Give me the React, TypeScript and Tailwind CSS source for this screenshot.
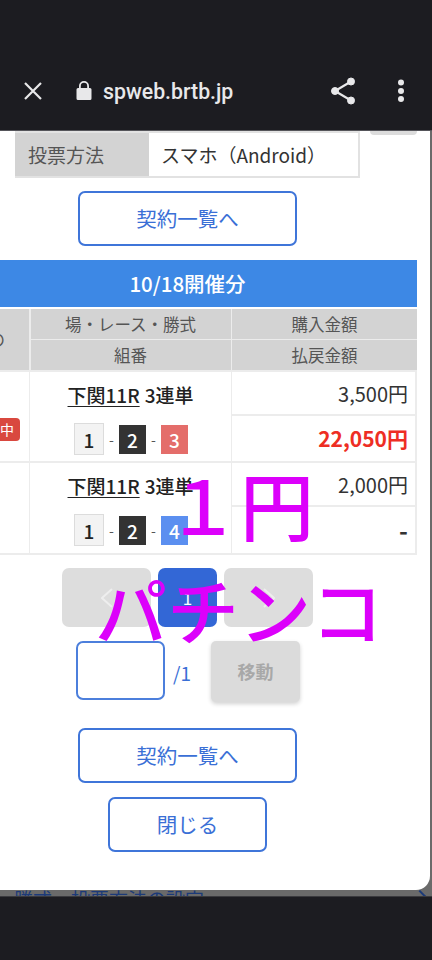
const jp = "font-['Noto_Sans_CJK_JP',_'Noto_Sans',_sans-serif]"

const ToolbarIcons = {
  close: (
    <svg viewBox="0 0 20 20" className="h-5 w-5" stroke="#e8e8ea" strokeWidth="2.2" fill="none">
      <path d="M2 2 L18 18 M18 2 L2 18" />
    </svg>
  ),
  lock: (
    <svg viewBox="0 0 16 20" className="h-5 w-4" fill="#e8e8ea">
      <path d="M2 7h1V5a5 5 0 0 1 10 0v2h1a1.5 1.5 0 0 1 1.5 1.5v9A1.5 1.5 0 0 1 14 19H2a1.5 1.5 0 0 1-1.5-1.5v-9A1.5 1.5 0 0 1 2 7zm2.8 0h6.4V5a3.2 3.2 0 0 0-6.4 0z" />
    </svg>
  ),
  share: (
    <svg viewBox="0 0 24 28" className="h-7 w-6" fill="#e8e8ea" stroke="#e8e8ea">
      <circle cx="20" cy="4.5" r="3.5" />
      <circle cx="4" cy="14" r="3.5" />
      <circle cx="20" cy="23.5" r="3.5" />
      <path d="M20 4.5 L4 14 L20 23.5" strokeWidth="2.2" fill="none" />
    </svg>
  ),
  more: (
    <svg viewBox="0 0 8 24" className="h-6 w-2" fill="#e8e8ea">
      <circle cx="4" cy="3.5" r="3" />
      <circle cx="4" cy="12" r="3" />
      <circle cx="4" cy="20" r="3" />
    </svg>
  ),
}

const Ticket = ({ last, lastClass }: { last: string; lastClass: string }) => (
  <div className="ml-[1px] flex items-center justify-center text-[19px] font-medium leading-none">
    <span className="flex h-[32px] w-[30px] items-center justify-center border border-[#dcdcdc] bg-[#f3f3f3] text-[#222]">1</span>
    <span className="mx-[5px] w-[5px] text-[14px] font-normal text-[#555]">-</span>
    <span className="flex h-[29px] w-[27px] items-center justify-center bg-[#333] text-white">2</span>
    <span className="mx-[5px] w-[5px] text-[14px] font-normal text-[#555]">-</span>
    <span className={`flex h-[29px] w-[27px] items-center justify-center text-white ${lastClass}`}>{last}</span>
  </div>
)

const HeadCell = ({ children }: { children: React.ReactNode }) => (
  <div className="flex items-center justify-center bg-[#d3d3d3] text-[16.5px] text-[#555]">{children}</div>
)

const OutlineButton = ({ label, width }: { label: string; width: string }) => (
  <button className={`mx-auto block h-[55px] rounded-[7px] border-2 border-[#3f75d9] bg-white text-[20.5px] text-[#3a6fd6] ${width}`}>
    {label}
  </button>
)

const Chevron = ({ flip }: { flip?: boolean }) => (
  <svg viewBox="0 0 12 20" className={`h-5 w-3 ${flip ? 'rotate-180' : ''}`} fill="none" stroke="#eeeeee" strokeWidth="2">
    <path d="M11 1 L1 10 L11 19" />
  </svg>
)

const TicketRow = ({
  amount,
  payout,
  payoutClass,
  last,
  lastClass,
  badge,
  rowClass,
}: {
  amount: string
  payout: string
  payoutClass: string
  last: string
  lastClass: string
  badge?: boolean
  rowClass: string
}) => (
  <div className={`grid grid-cols-[71px_203px_185px] border-b-2 border-[#ececec] ${rowClass}`}>
    <div className="flex items-start justify-end pr-[9px]">
      {badge && (
        <span className="mt-[46px] flex h-[23px] w-[40px] items-center justify-center rounded-[4px] bg-[#d9483f] text-[14px] text-white">
          的中
        </span>
      )}
    </div>
    <div className="flex flex-col items-center border-x-[1.5px] border-[#ececec] pt-[8px]">
      <div className="flex h-[30px] items-center text-[19px] font-medium text-[#222]">
        <span className="underline underline-offset-[3px]">下関11R</span>
        <span className="ml-[5px]">3連単</span>
      </div>
      <div className="mt-[13px]">
        <Ticket last={last} lastClass={lastClass} />
      </div>
    </div>
    <div className="grid grid-rows-[44px_1fr] border-r-2 border-[#ececec]">
      <div className="flex items-center justify-end border-b-2 border-[#ececec] pr-[7px] pt-[1px] text-[20px] text-[#333]">{amount}</div>
      <div className={`flex items-center justify-end pr-[7px] ${payoutClass}`}>{payout}</div>
    </div>
  </div>
)

export default function App() {
  return (
    <div className={`relative flex h-[960px] w-[432px] flex-col overflow-hidden bg-[#1c1c21] ${jp}`}>
      <header className="flex h-[131px] shrink-0 items-end border-b border-[#55555a] pb-[25px]">
        <div className="flex h-[28px] w-full items-center">
          <div className="ml-[23px]">{ToolbarIcons.close}</div>
          <div className="ml-[33px]">{ToolbarIcons.lock}</div>
          <span className="ml-[11px] mt-[2px] font-['Roboto',_sans-serif] text-[21.3px] font-medium leading-[28px] text-[#e8e8ea]">spweb.brtb.jp</span>
          <div className="ml-auto mr-[42px]">{ToolbarIcons.share}</div>
          <div className="mr-[27px]">{ToolbarIcons.more}</div>
        </div>
      </header>

      <main className="flex h-[765px] shrink-0 flex-col bg-[#6a6a6a]">
        <div className="mr-[2px] flex h-[759px] shrink-0 flex-col overflow-hidden rounded-br-[14px] bg-white">
          <div className="flex items-start">
            <div className="ml-[15px] flex h-[47px] w-[345px] border-y-2 border-r-2 border-[#e2e2e2]">
              <div className="flex w-[134px] items-center bg-[#d3d3d3] pl-[13px] pt-[2px] text-[19px] text-[#555]">投票方法</div>
              <div className="flex flex-1 items-center pl-[12px] pt-[2px] text-[19px] text-[#333]">スマホ（Android）</div>
            </div>
            <div className="ml-[10px] h-[4px] w-[47px] rounded-b-[5px] bg-[#dcdcdc]" />
          </div>

          <div className="mt-[13px] w-[375px]">
            <OutlineButton label="契約一覧へ" width="w-[219px]" />
          </div>

          <section className="-ml-[42px] mt-[14px] w-[459px]">
            <div className="flex h-[47px] items-center justify-center bg-[#3d88e5] text-[20.5px] font-medium text-white">10/18開催分</div>
            <div className="mt-[2px] grid h-[63px] grid-cols-[71px_200px_185px] grid-rows-2 gap-[1.5px] border-b-2 border-[#ececec] bg-[#ececec]">
              <div className="row-span-2 flex items-center justify-end bg-[#d3d3d3] pr-[24px] text-[16.5px] text-[#555]">の</div>
              <HeadCell>場・レース・勝式</HeadCell>
              <HeadCell>購入金額</HeadCell>
              <HeadCell>組番</HeadCell>
              <HeadCell>払戻金額</HeadCell>
            </div>
            <TicketRow
              amount="3,500円"
              payout="22,050円"
              payoutClass="text-[21px] font-bold text-[#ee2e24]"
              last="3"
              lastClass="bg-[#e46d6a]"
              badge
              rowClass="h-[91px]"
            />
            <TicketRow
              amount="2,000円"
              payout="-"
              payoutClass="text-[24px] font-bold text-[#333]"
              last="4"
              lastClass="bg-[#5b8ff0]"
              rowClass="h-[92px]"
            />
          </section>

          <nav className="ml-[62px] mt-[13px] flex gap-[7px]">
            <div className="flex h-[59px] w-[89px] items-center justify-center rounded-[7px] bg-[#dddddd]">
              <Chevron />
            </div>
            <div className="flex h-[59px] w-[59px] items-center justify-center rounded-[7px] bg-[#3367d6] text-[17px] text-white">1</div>
            <div className="flex h-[59px] w-[89px] items-center justify-center rounded-[7px] bg-[#dddddd]">
              <Chevron flip />
            </div>
          </nav>

          <div className="ml-[76px] mt-[14px] flex items-start">
            <div className="h-[59px] w-[89px] rounded-[7px] border-2 border-[#4c7fdc] bg-white" />
            <span className="ml-[8px] mt-[19px] text-[19px] leading-[26px] text-[#3a6fd6]">/1</span>
            <button className="ml-[20px] h-[61px] w-[89px] rounded-[5px] bg-[#dbdbdb] text-[18px] font-bold text-[#a8a8a8] shadow-[0_2px_4px_rgba(0,0,0,0.18)]">移動</button>
          </div>

          <div className="mt-[26px] w-[375px]">
            <OutlineButton label="契約一覧へ" width="w-[219px]" />
          </div>
          <div className="mt-[14px] w-[375px]">
            <OutlineButton label="閉じる" width="w-[159px]" />
          </div>
        </div>

        <div className="relative h-[6px] overflow-hidden">
          <span className="absolute left-[14px] -top-[4px] text-[19px] leading-[26px] text-[#1c3a78]">勝式・投票方法の設定</span>
          <span className="absolute right-[7px] top-[2px] h-[10px] w-[10px] rotate-45 border-t-2 border-r-2 border-[#1c3a78]" />
        </div>
      </main>

      <footer className="flex-1 border-t border-[#3a3a3e]" />

      <div className="pointer-events-none absolute left-[166px] top-[453px] whitespace-nowrap text-[74px] font-medium leading-[100px] text-[#dc00fb]">{'\uFF11円'}</div>
      <div className="pointer-events-none absolute left-[95px] top-[558px] whitespace-nowrap text-[72px] font-medium leading-[100px] text-[#dc00fb]">パチンコ</div>
    </div>
  )
}
